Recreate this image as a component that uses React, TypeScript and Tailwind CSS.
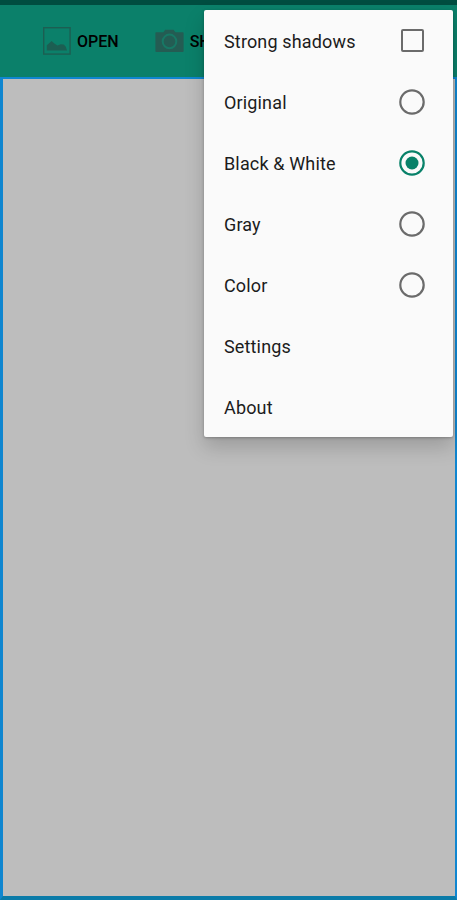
const menuItems = [
  { label: 'Strong shadows', control: 'checkbox', checked: false },
  { label: 'Original', control: 'radio', checked: false },
  { label: 'Black & White', control: 'radio', checked: true },
  { label: 'Gray', control: 'radio', checked: false },
  { label: 'Color', control: 'radio', checked: false },
  { label: 'Settings', control: null, checked: false },
  { label: 'About', control: null, checked: false },
];

const ImageIcon = () => (
  <svg width="28" height="28" viewBox="0 0 28 28" className="shrink-0">
    <rect x="0.7" y="0.7" width="26.4" height="26.4" fill="none" stroke="#1c5e52" strokeWidth="1.4" />
    <path d="M3.8 23.4v-5.2l2-1.8 2.8-2.4 2.8 2.6 3 2 3.4-1.4 3 .4 2 2.2 1.2 3.6z" fill="#1c5e52" />
  </svg>
);

const CameraIcon = () => (
  <svg width="29" height="24" viewBox="0 0 29 24" className="shrink-0">
    <path
      d="M1.2 3.2h7.2L10.2.8h8.4l1.8 2.4h7.4a.8.8 0 0 1 .8.8v18.2a.8.8 0 0 1-.8.8H1.2a.8.8 0 0 1-.8-.8V4a.8.8 0 0 1 .8-.8z"
      fill="#245c53"
    />
    <circle cx="14.5" cy="12.4" r="6.8" fill="none" stroke="#177865" strokeWidth="2" />
  </svg>
);

const Control = ({ type, checked }: { type: string | null; checked: boolean }) => {
  if (type === 'checkbox') {
    return <span className="mr-px size-[23px] rounded-[2px] border-2 border-[#6b6b6b]" />;
  }
  if (type === 'radio') {
    return (
      <svg width="26" height="26" viewBox="0 0 26 26">
        <circle cx="13" cy="13" r="11.7" fill="none" stroke={checked ? '#088169' : '#6b6b6b'} strokeWidth="2.2" />
        {checked && <circle cx="13" cy="13" r="6.5" fill="#088169" />}
      </svg>
    );
  }
  return null;
};

const App = () => {
  return (
    <div className="relative flex h-[900px] w-[457px] flex-col overflow-hidden bg-[#bdbdbd] font-['Roboto',sans-serif]">
      <div className="h-[5px] shrink-0 bg-[#004d40]" />
      <header className="flex h-[72px] shrink-0 items-center bg-[#0b806a] pl-[43px] text-black">
        <button className="flex items-center gap-[6px] text-[16px] font-medium">
          <ImageIcon />
          <span className="pt-[2px]">OPEN</span>
        </button>
        <button className="ml-[36px] flex items-center gap-[6px] text-[16px] font-medium">
          <CameraIcon />
          <span className="pt-[2px]">SH</span>
        </button>
      </header>
      <main className="flex-1 border-2 border-b-4 border-l-3 border-[#0f86d0] border-b-[#0a7ba8] bg-[#bdbdbd]" />

      <div className="absolute top-[10px] left-[204px] h-[427px] w-[249px] rounded-[2px] bg-[#fafafa] shadow-[0_10px_20px_rgba(0,0,0,0.18),0_1px_3px_rgba(0,0,0,0.25)]">
        <ul>
          {menuItems.map((item) => (
            <li
              key={item.label}
              className="flex h-[61px] items-center justify-between pr-[28px] pl-[20px] text-[18px] tracking-[0.15px] text-[#1c1c1c]"
            >
              <span className="pt-[2px]">{item.label}</span>
              <Control type={item.control} checked={item.checked} />
            </li>
          ))}
        </ul>
      </div>
    </div>
  );
};

export default App;
